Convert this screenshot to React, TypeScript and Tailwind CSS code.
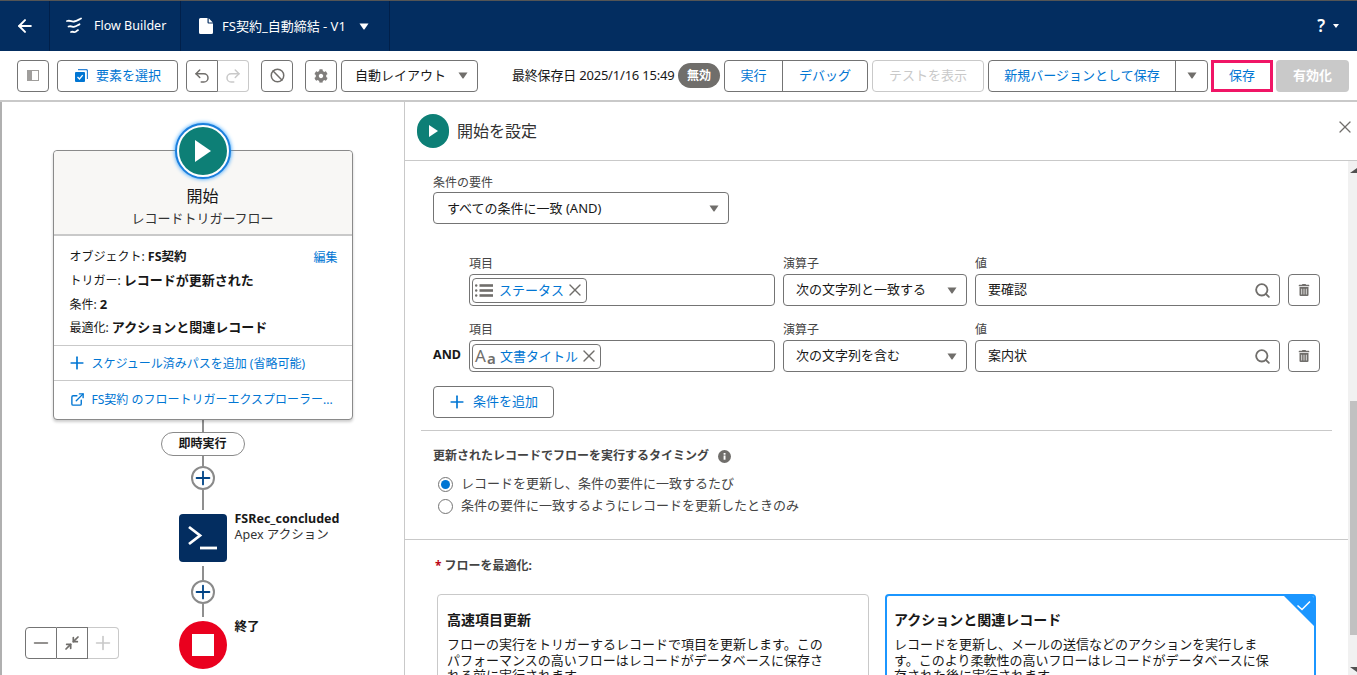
import React from "react";
import { ArrowLeft, Ban, ExternalLink, Minimize2, Minus, Plus, Redo2, Search, Undo2, X } from "lucide-react";
import { FaCog, FaTrashAlt } from "react-icons/fa";

const Caret = ({ className = "" }: { className?: string }) => (
  <svg width="10" height="7" viewBox="0 0 10 7" className={className}>
    <path d="M0.500 0.500h9L5.600 6.200a.8.8 0 0 1-1.200 0z" fill="currentColor" />
  </svg>
);

const IconButton = ({ children, className = "" }: { children: React.ReactNode; className?: string }) => (
  <div className={`w-8 h-8 flex items-center justify-center border border-[#747474] rounded-[4px] bg-white text-[#706e6b] ${className}`}>
    {children}
  </div>
);

const FieldLabel = ({ children, className = "" }: { children: React.ReactNode; className?: string }) => (
  <div className={`h-4 leading-[18px] text-[12px] text-[#444444] ${className}`}>{children}</div>
);

const ListIcon = () => (
  <svg width="18" height="13" viewBox="0 0 18 13" fill="#706e6b">
    <rect x="0" y="0.300" width="2.400" height="2.400" rx="1.200" />
    <rect x="0" y="5.300" width="2.400" height="2.400" rx="1.200" />
    <rect x="0" y="10.300" width="2.400" height="2.400" rx="1.200" />
    <rect x="4.500" y="0.200" width="13.500" height="2.600" />
    <rect x="4.500" y="5.200" width="13.500" height="2.600" />
    <rect x="4.500" y="10.200" width="13.500" height="2.600" />
  </svg>
);

const conditions = [
  { and: false, pillIcon: "list", pill: "ステータス", op: "次の文字列と一致する", value: "要確認" },
  { and: true, pillIcon: "text", pill: "文書タイトル", op: "次の文字列を含む", value: "案内状" },
];

const ConditionRow = ({ row, first }: { row: (typeof conditions)[number]; first: boolean }) => (
  <div className={first ? "mt-[31px]" : "mt-[15px]"}>
    <div className="flex text-[12px]">
      <div className="w-9" />
      <FieldLabel className="w-[314px]">項目</FieldLabel>
      <FieldLabel className="w-[192px]">演算子</FieldLabel>
      <FieldLabel>値</FieldLabel>
    </div>
    <div className="flex items-center mt-[3px]">
      <div className="w-9 text-[12.500px] font-bold text-[#181818] -translate-y-px">{row.and ? "AND" : ""}</div>
      <div className="w-[306px] h-8 border border-[#747474] rounded-[4px] flex items-center pl-[2px]">
        <div className="h-[25px] border border-[#747474] rounded-[4px] flex items-center pl-[2px] pr-[1px]">
          {row.pillIcon === "list" ? (
            <span className="mr-[6px] flex"><ListIcon /></span>
          ) : (
            <span className="w-[20px] mr-[5px] flex items-end text-[#706e6b] leading-none">
              <span className="text-[17px] leading-[18px]">A</span>
              <span className="text-[15px] font-semibold leading-[15px] ml-px -mb-px">a</span>
            </span>
          )}
          <span className="text-[13px] text-[#0176d3] leading-[22px]">{row.pill}</span>
          <X size={20} strokeWidth={1.600} className="ml-[1px] text-[#706e6b]" />
        </div>
      </div>
      <div className="ml-2 w-[184px] h-8 border border-[#747474] rounded-[4px] flex items-center justify-between pl-3 pr-[9px] text-[13px] text-[#181818]">
        <span>{row.op}</span>
        <Caret className="text-[#706e6b]" />
      </div>
      <div className="ml-2 w-[305px] h-8 border border-[#747474] rounded-[4px] flex items-center justify-between pl-3 pr-[8px] text-[13px] text-[#181818]">
        <span>{row.value}</span>
        <Search size={17} strokeWidth={2.600} className="text-[#706e6b]" />
      </div>
      <IconButton className="ml-2">
        <FaTrashAlt size={12} />
      </IconButton>
    </div>
  </div>
);

const Connector = ({ h }: { h: string }) => <div className={`w-[2px] bg-[#8f8f8f] ${h}`} />;

const AddNode = () => (
  <div className="w-6 h-6 shrink-0 rounded-full border-[2px] border-[#8a8a8a] bg-white flex items-center justify-center text-[#014486]">
    <Plus size={22} strokeWidth={2} className="shrink-0" />
  </div>
);

export default function App() {
  return (
    <div className="w-[1357px] h-[675px] overflow-hidden bg-white text-[13px] text-[#181818] font-['Noto_Sans','Noto_Sans_CJK_JP',sans-serif]">
      {/* Header */}
      <div className="h-[51px] bg-[#032d60] border-t border-[#555555] flex items-center text-white">
        <div className="w-[50px] h-full flex items-center justify-center border-r border-[#01204a]">
          <ArrowLeft size={20} strokeWidth={2.400} />
        </div>
        <div className="w-[131px] h-full flex items-center pl-[16px] border-r border-[#01204a]">
          <svg width="16" height="18" viewBox="0 0 16 18" fill="none" stroke="white" strokeWidth="1.800" strokeLinecap="round">
            <path d="M1 4c4-1 4 1 7 .5S12 3 15 1.500" />
            <path d="M2.500 9.500c3-1 4 .8 6 .2s3-1.600 5-2.400" />
            <path d="M5 15c2-.8 2.500.5 4 0s1.500-1.200 3-1.800" />
          </svg>
          <span className="ml-[12px] text-[12.500px] pt-px">Flow Builder</span>
        </div>
        <div className="w-[209px] h-full flex items-center pl-[18px] border-r border-[#01204a]">
          <svg width="14" height="16" viewBox="0 0 14 16" fill="white">
            <path d="M1.500 0H8.500v4.500a1 1 0 0 0 1 1H14V14.500a1.500 1.500 0 0 1-1.500 1.500h-11A1.500 1.500 0 0 1 0 14.500v-13A1.500 1.500 0 0 1 1.500 0z" />
            <path d="M9.700 0.300 13.800 4.400H9.700z" />
          </svg>
          <span className="ml-[9px] text-[13px] pt-px whitespace-nowrap">FS契約_自動締結 - V1</span>
          <Caret className="ml-[13px] text-white" />
        </div>
        <div className="flex-1" />
        <div className="flex items-center pr-[18px]">
          <span className="text-[17px] font-semibold">?</span>
          <svg width="6" height="4" viewBox="0 0 6 4" className="ml-[8px]"><path d="M0 0h6L3 4z" fill="white" /></svg>
        </div>
      </div>

      {/* Toolbar */}
      <div className="h-[51px] border-b-2 border-[#c9c9c9] flex items-center pl-[17px]">
        <IconButton>
          <svg width="12" height="11" viewBox="0 0 12 11">
            <rect x="0.500" y="0.500" width="11" height="10" fill="none" stroke="#a09e9c" />
            <rect x="0.500" y="0.500" width="4.500" height="10" fill="#a09e9c" />
          </svg>
        </IconButton>
        <div className="ml-2 w-[121px] h-8 border border-[#747474] rounded-[4px] flex items-center pl-[17px]">
          <svg width="13" height="13" viewBox="0 0 13 13">
            <path d="M3 .5h8a1.500 1.500 0 0 1 1.500 1.500v8" fill="none" stroke="#2e84d6" strokeWidth="1.300" />
            <rect x="0" y="3" width="10" height="10" rx="1" fill="#0176d3" />
            <path d="M2.500 8l2 2 3.200-3.800" fill="none" stroke="white" strokeWidth="1.300" />
          </svg>
          <span className="ml-[8px] text-[#0176d3]">要素を選択</span>
        </div>
        <div className="ml-2 flex">
          <div className="w-8 h-8 border border-[#747474] rounded-l-[4px] flex items-center justify-center text-[#706e6b]">
            <Undo2 size={18} strokeWidth={2} />
          </div>
          <div className="w-[31px] h-8 border border-l-0 border-[#c9c9c9] rounded-r-[4px] flex items-center justify-center text-[#c9c9c9]">
            <Redo2 size={18} strokeWidth={2} />
          </div>
        </div>
        <IconButton className="ml-3">
          <Ban size={15} strokeWidth={2.400} />
        </IconButton>
        <IconButton className="ml-3 text-[#807e7c]">
          <FaCog size={14} />
        </IconButton>
        <div className="ml-1 w-[137px] h-8 border border-[#747474] rounded-[4px] flex items-center justify-between pl-[13px] pr-[9px]">
          <span className="text-[13px] whitespace-nowrap">自動レイアウト</span>
          <Caret className="text-[#706e6b]" />
        </div>
        <span className="ml-[34px] w-[166px] whitespace-nowrap text-[13px] tracking-[-0.2px]">最終保存日 2025/1/16 15:49</span>
        <div className="w-[42px] h-[25px] rounded-full bg-[#706e6b] text-white text-[12px] font-bold flex items-center justify-center">無効</div>
        <div className="ml-1 flex h-8 border border-[#747474] rounded-[4px] text-[#0176d3]">
          <div className="w-[58px] flex items-center justify-center border-r border-[#747474]">実行</div>
          <div className="w-[84px] flex items-center justify-center">デバッグ</div>
        </div>
        <div className="ml-1 w-[112px] h-8 border border-[#c9c9c9] rounded-[4px] flex items-center justify-center text-[#c9c9c9]">テストを表示</div>
        <div className="ml-1 flex h-8 border border-[#747474] rounded-[4px]">
          <div className="w-[187px] flex items-center justify-center border-r border-[#747474] text-[#0176d3]">新規バージョンとして保存</div>
          <div className="w-[31px] flex items-center justify-center text-[#706e6b]"><Caret /></div>
        </div>
        <div className="ml-[3px] w-[62px] h-8 border-[3px] border-[#f01566] flex items-center justify-center text-[#0176d3]">保存</div>
        <div className="ml-[3px] w-[73px] h-8 rounded-[4px] bg-[#c9c9c9] flex items-center justify-center text-white font-semibold">有効化</div>
      </div>

      <div className="h-[573px] flex">
        {/* Canvas */}
        <div className="relative w-[405px] h-full border-l-2 border-l-[#b0b0b0] border-r border-r-[#c9c9c9] flex flex-col items-center pr-[1px]">
          <div className="relative mt-[48px] w-[300px] h-[270px] border border-[#8a8a8a] rounded-[4px] bg-white shadow-[0_2px_3px_rgba(0,0,0,0.2)]">
            <div className="h-[85px] bg-[#f8f7f5] border-b-[2px] border-[#c9c9c9] rounded-t-[4px] flex flex-col items-center pt-[34px]">
              <div className="text-[16px] leading-[22px]">開始</div>
              <div className="text-[13px] leading-[20px] text-[#333333] mt-px">レコードトリガーフロー</div>
            </div>
            <div className="absolute left-1/2 top-[-28px] -translate-x-1/2 w-[56px] h-[56px] rounded-full bg-white border-[2px] border-[#1b7fdc] shadow-[0_0_4px_#1b96ff] flex items-center justify-center">
              <div className="w-[48px] h-[48px] rounded-full bg-[#0d7f76] flex items-center justify-center">
                <svg width="18" height="24" viewBox="0 0 18 24"><path d="M1 1v22l16-11z" fill="white" /></svg>
              </div>
            </div>
            <div className="h-[110px] border-b border-[#c9c9c9] pl-[16px] pr-[14px] pt-[10px] text-[12px]">
              <div className="h-[23px] flex items-center justify-between">
                <span>オブジェクト: <b className="text-[12.500px]">FS契約</b></span>
                <span className="text-[#0176d3]">編集</span>
              </div>
              <div className="h-[24px] flex items-center"><span>トリガー: <b className="text-[13px]">レコードが更新された</b></span></div>
              <div className="h-[23px] flex items-center"><span>条件: <b className="text-[13px]">2</b></span></div>
              <div className="h-[24px] flex items-center"><span>最適化: <b className="text-[13px]">アクションと関連レコード</b></span></div>
            </div>
            <div className="h-[35px] border-b border-[#c9c9c9] flex items-center pl-[13px] text-[12px] text-[#0176d3]">
              <Plus size={20} strokeWidth={2} className="shrink-0" />
              <span className="ml-[5px] pt-px whitespace-nowrap">スケジュール済みパスを追加 (省略可能)</span>
            </div>
            <div className="h-[37px] flex items-center pl-[16px] text-[12px] text-[#0176d3]">
              <ExternalLink size={15} strokeWidth={2.200} className="shrink-0" />
              <span className="ml-[7px] pt-px whitespace-nowrap">FS契約 のフロートリガーエクスプローラー...</span>
            </div>
          </div>
          <Connector h="h-[12px]" />
          <div className="w-[84px] h-[24px] rounded-full border border-[#8a8a8a] bg-white flex items-center justify-center font-bold text-[12px]">即時実行</div>
          <Connector h="h-[10px]" />
          <AddNode />
          <Connector h="h-[20px]" />
          <div className="relative mt-[4px] w-12 h-12 rounded-[4px] bg-[#032d60] flex items-center justify-center">
            <svg width="30" height="26" viewBox="0 0 30 26" fill="none" stroke="white" strokeWidth="2.800">
              <path d="M1 2l11 8.500L1 19" />
              <path d="M12 23h17" />
            </svg>
            <div className="absolute left-[56px] top-[-3px] whitespace-nowrap leading-[16px] text-[12.500px]">
              <div className="font-bold">FSRec_concluded</div>
              <div className="text-[#333333]">Apex アクション</div>
            </div>
          </div>
          <Connector h="mt-[4px] h-[14px]" />
          <AddNode />
          <Connector h="h-[13px]" />
          <div className="relative mt-[4px] w-12 h-12 rounded-full bg-[#ea001e] flex items-center justify-center">
            <div className="w-[22px] h-[22px] bg-white" />
            <div className="absolute left-[56px] top-[-2px] whitespace-nowrap font-bold text-[12.500px] leading-[16px]">終了</div>
          </div>

          {/* Zoom controls */}
          <div className="absolute left-[23px] top-[525px] flex">
            <div className="w-[32px] h-8 border border-[#747474] rounded-l-[4px] flex items-center justify-center text-[#706e6b]"><Minus size={22} strokeWidth={1.800} /></div>
            <div className="w-[31px] h-8 border border-l-0 border-[#747474] flex items-center justify-center text-[#706e6b]"><Minimize2 size={16} strokeWidth={2.600} /></div>
            <div className="w-[31px] h-8 border border-l-0 border-[#c9c9c9] rounded-r-[4px] flex items-center justify-center text-[#c9c9c9]"><Plus size={22} strokeWidth={1.800} /></div>
          </div>
        </div>

        {/* Configuration panel */}
        <div className="flex-1 flex flex-col min-w-0">
          <div className="h-[59px] shrink-0 border-b border-[#c9c9c9] flex items-center pl-[12px] pr-[2px]">
            <div className="w-8 h-[34px] rounded-full bg-[#0d7f76] flex items-center justify-center">
              <svg width="9" height="12" viewBox="0 0 9 12"><path d="M0 0v12l9-6z" fill="white" /></svg>
            </div>
            <span className="ml-2 text-[16px] text-[#333333]">開始を設定</span>
            <X size={20} strokeWidth={1.500} className="ml-auto -translate-y-[4px] text-[#706e6b]" />
          </div>
          <div className="flex-1 flex min-h-0">
            <div className="flex-1 overflow-hidden">
              <div className="pl-[28px] pt-[13px]">
                <FieldLabel>条件の要件</FieldLabel>
                <div className="mt-[2px] w-[296px] h-8 border border-[#747474] rounded-[4px] flex items-center justify-between pl-[13px] pr-[9px]">
                  <span className="pt-px">すべての条件に一致 (AND)</span>
                  <Caret className="text-[#706e6b]" />
                </div>
                {conditions.map((row, i) => (
                  <ConditionRow key={i} row={row} first={i === 0} />
                ))}
                <div className="mt-[14px] w-[121px] h-8 border border-[#747474] rounded-[4px] flex items-center pl-[13px] text-[#0176d3]">
                  <Plus size={20} strokeWidth={2} className="shrink-0" />
                  <span className="ml-[6px] text-[13px]">条件を追加</span>
                </div>
              </div>
              <div className="mt-[12px] ml-[16px] mr-[16px] h-px bg-[#c9c9c9]" />
              <div className="pl-[28px] pt-[17px]">
                <div className="h-4 leading-[18px] flex items-center text-[12px] font-bold text-[#444444]">
                  更新されたレコードでフローを実行するタイミング
                  <svg width="13" height="13" viewBox="0 0 13 13" className="ml-[9px]">
                    <circle cx="6.500" cy="6.500" r="6.500" fill="#706e6b" />
                    <rect x="5.600" y="5.500" width="1.900" height="4.200" fill="white" />
                    <rect x="5.600" y="3" width="1.900" height="1.700" fill="white" />
                  </svg>
                </div>
                <div className="mt-[9px] h-[22px] flex items-center pl-[5px] text-[#444444]">
                  <div className="w-[15px] h-[15px] rounded-full border border-[#747474] flex items-center justify-center">
                    <div className="w-[9px] h-[9px] rounded-full bg-[#0176d3]" />
                  </div>
                  <span className="ml-2">レコードを更新し、条件の要件に一致するたび</span>
                </div>
                <div className="h-[22px] flex items-center pl-[5px] text-[#444444]">
                  <div className="w-[15px] h-[15px] rounded-full border border-[#747474]" />
                  <span className="ml-2">条件の要件に一致するようにレコードを更新したときのみ</span>
                </div>
              </div>
              <div className="mt-[22px] h-px bg-[#c9c9c9]" />
              <div className="pl-[30px] pt-[17px]">
                <div className="h-4 leading-[17px] text-[12px] font-bold text-[#444444]">
                  <span className="text-[#ba0517] mr-[3px]">*</span>フローを最適化:
                </div>
              </div>
              <div className="mt-[21px] ml-[32px] flex gap-4">
                <div className="w-[432px] h-[120px] border border-[#c9c9c9] rounded-[4px] px-[9px] pt-[15px] overflow-hidden">
                  <div className="h-5 leading-5 text-[14px] font-semibold">高速項目更新</div>
                  <div className="mt-[7px] leading-[15.500px] whitespace-nowrap text-[#181818]">
                    <div>フローの実行をトリガーするレコードで項目を更新します。この</div>
                    <div>パフォーマンスの高いフローはレコードがデータベースに保存さ</div>
                    <div>れる前に実行されます。</div>
                  </div>
                </div>
                <div className="relative w-[431px] h-[120px] border-2 border-[#1b96ff] rounded-[4px] pl-[7px] pr-[8px] pt-[14px] overflow-hidden">
                  <div className="h-5 leading-5 text-[14px] font-semibold">アクションと関連レコード</div>
                  <div className="mt-[7px] leading-[15.500px] whitespace-nowrap text-[#181818]">
                    <div>レコードを更新し、メールの送信などのアクションを実行しま</div>
                    <div>す。このより柔軟性の高いフローはレコードがデータベースに保</div>
                    <div>存された後に実行されます。</div>
                  </div>
                  <svg width="30" height="30" viewBox="0 0 30 30" className="absolute top-0 right-0">
                    <path d="M0 0h30v30z" fill="#1b96ff" />
                    <path d="M13.500 9.500l4.500 4 8-8" fill="none" stroke="white" strokeWidth="1.500" />
                  </svg>
                </div>
              </div>
            </div>
            {/* Scrollbar */}
            <div className="w-[9px] shrink-0 bg-[#f1f1f1] flex flex-col pl-[2px]">
              <svg width="7" height="5" viewBox="0 0 7 5" className="mt-[7px]"><path d="M0 5h7V0z" fill="#505050" /></svg>
              <div className="mt-[228px] h-[234px] bg-[#c1c1c1]" />
              <svg width="7" height="5" viewBox="0 0 7 5" className="mt-[32px]"><path d="M0 0h7v5z" fill="#505050" /></svg>
            </div>
          </div>
        </div>
      </div>
    </div>
  );
}
